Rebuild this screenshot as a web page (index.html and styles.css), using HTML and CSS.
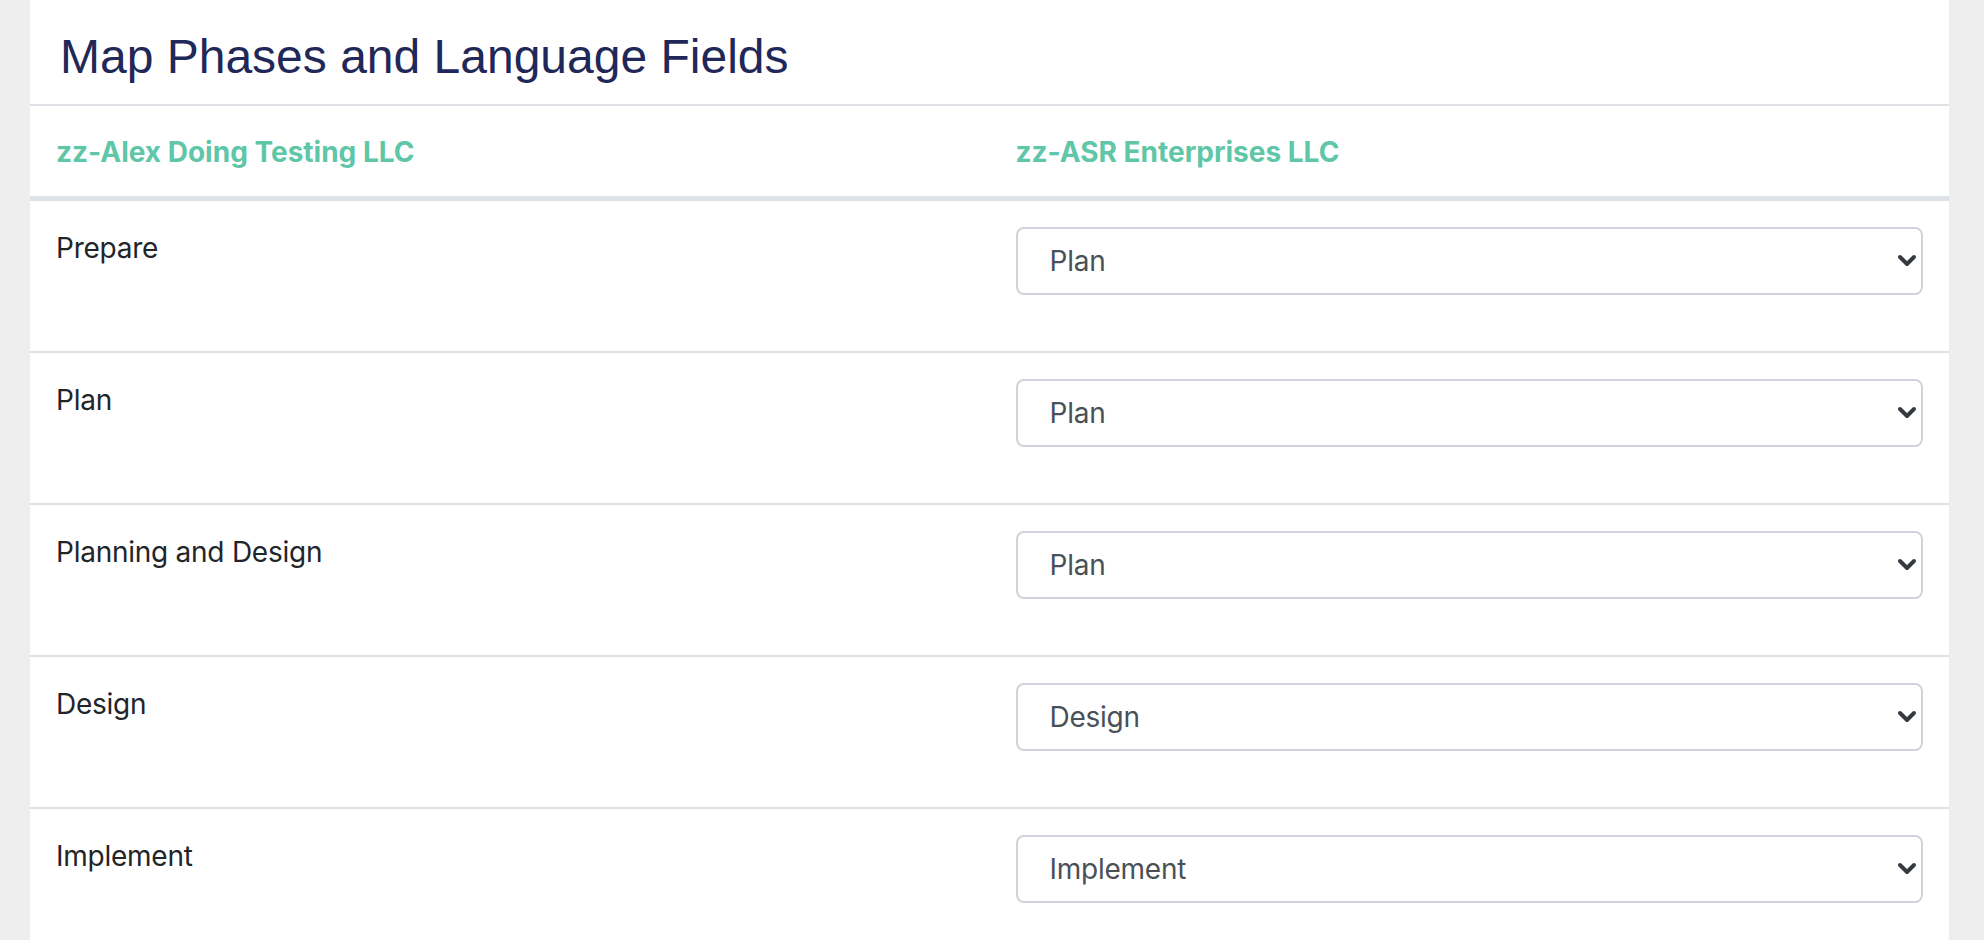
FILE: index.html
```html
<!DOCTYPE html>
<html lang="en">
<head>
  <meta charset="UTF-8" />
  <meta name="viewport" content="width=device-width, initial-scale=1.0"/>
  <title>Map Phases and Language Fields</title>
  <link rel="stylesheet" href="styles.css">
</head>
<body>
  <div class="page">
    <div class="card">
      <h1 class="card-title">Map Phases and Language Fields</h1>

      <table class="map-table">
        <thead>
          <tr>
            <th>zz-Alex Doing Testing LLC</th>
            <th>zz-ASR Enterprises LLC</th>
          </tr>
        </thead>
        <tbody>
          <tr>
            <td>Prepare</td>
            <td>
              <div class="form-group">
                <select class="custom-select">
                  <option selected>Plan</option>
                  <option>Design</option>
                  <option>Implement</option>
                </select>
                <svg class="chevron" viewBox="0 0 20 13"><path d="M3 3l7 7 7-7"/></svg>
              </div>
            </td>
          </tr>
          <tr>
            <td>Plan</td>
            <td>
              <div class="form-group">
                <select class="custom-select">
                  <option selected>Plan</option>
                  <option>Design</option>
                  <option>Implement</option>
                </select>
                <svg class="chevron" viewBox="0 0 20 13"><path d="M3 3l7 7 7-7"/></svg>
              </div>
            </td>
          </tr>
          <tr>
            <td>Planning and Design</td>
            <td>
              <div class="form-group">
                <select class="custom-select">
                  <option selected>Plan</option>
                  <option>Design</option>
                  <option>Implement</option>
                </select>
                <svg class="chevron" viewBox="0 0 20 13"><path d="M3 3l7 7 7-7"/></svg>
              </div>
            </td>
          </tr>
          <tr>
            <td>Design</td>
            <td>
              <div class="form-group">
                <select class="custom-select">
                  <option>Plan</option>
                  <option selected>Design</option>
                  <option>Implement</option>
                </select>
                <svg class="chevron" viewBox="0 0 20 13"><path d="M3 3l7 7 7-7"/></svg>
              </div>
            </td>
          </tr>
          <tr>
            <td>Implement</td>
            <td>
              <div class="form-group">
                <select class="custom-select">
                  <option>Plan</option>
                  <option>Design</option>
                  <option selected>Implement</option>
                </select>
                <svg class="chevron" viewBox="0 0 20 13"><path d="M3 3l7 7 7-7"/></svg>
              </div>
            </td>
          </tr>
        </tbody>
      </table>
    </div>
  </div>
</body>
</html>
```

FILE: styles.css
```css
body {
  margin: 0;
  background: #eeeeee;
  font-family: Inter, "Noto Sans", sans-serif;
  color: #212529;
}

.page {
  padding: 0 35px 0 30px;
}

.card {
  background: #fff;
  width: 1919px;
  min-height: 940px;
}

.card-title {
  margin: 0;
  padding: 28px 30px 18px;
  font-family: "Liberation Sans", Arial, sans-serif;
  font-weight: 400;
  font-size: 48px;
  line-height: 58px;
  color: #1f2858;
  border-bottom: 2px solid #dee2e6;
}

.map-table {
  width: 100%;
  border-collapse: collapse;
  table-layout: fixed;
}

.map-table th {
  text-align: left;
  font-size: 28px;
  font-weight: 700;
  line-height: 42px;
  color: #60c6a8;
  padding: 25px 26px 23px;
  border-bottom: 5px solid #dee2e6;
}

.map-table td {
  vertical-align: top;
  padding: 26px;
  font-size: 28px;
  letter-spacing: -0.25px;
  line-height: 43px;
  border-bottom: 2px solid #dee2e6;
}

.form-group {
  position: relative;
  margin-bottom: 30px;
}

.custom-select {
  display: block;
  width: 100%;
  height: 68px;
  padding: 0 60px 0 32px;
  font-family: Inter, "Noto Sans", sans-serif;
  font-size: 28px;
  letter-spacing: -0.25px;
  color: #495057;
  background: #fff;
  border: 2px solid #ced4da;
  border-radius: 8px;
  -webkit-appearance: none;
  appearance: none;
}

.chevron {
  position: absolute;
  right: 6px;
  top: 27px;
  width: 20px;
  height: 13px;
  fill: none;
  stroke: #343a40;
  stroke-width: 4;
  stroke-linecap: round;
  stroke-linejoin: round;
  pointer-events: none;
}
```
